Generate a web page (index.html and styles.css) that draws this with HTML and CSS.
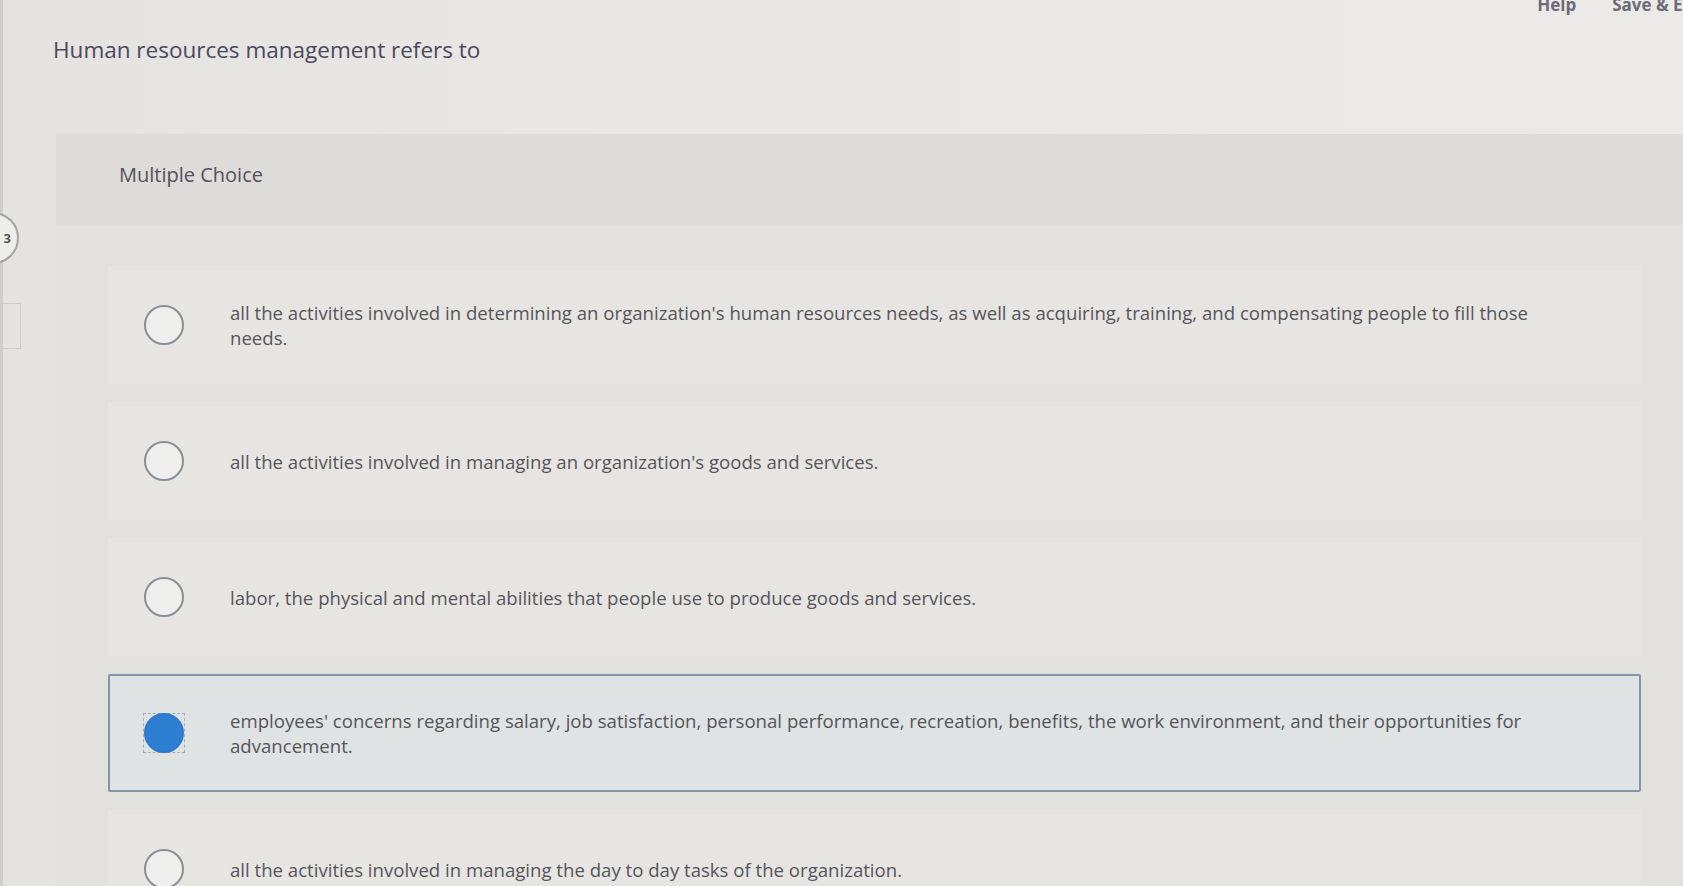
FILE: index.html
```html
<!DOCTYPE html>
<html lang="en">
<head>
<meta charset="utf-8">
<title>Multiple Choice</title>
<link rel="stylesheet" href="styles.css">
</head>
<body>
<div class="page">
  <div class="side-tab"><span>3</span></div>
  <div class="side-box"></div>
  <header class="topbar">
    <span class="top-link">Help</span>
    <span class="top-link">Save &amp; Exit</span>
  </header>
  <main class="content">
    <h1 class="question">Human resources management refers to</h1>
    <section class="panel">
      <div class="panel-head">Multiple Choice</div>
      <div class="options">
        <div class="option">
          <span class="radio"></span>
          <p class="option-text">all the activities involved in determining an organization's human resources needs, as well as acquiring, training, and compensating people to fill those needs.</p>
        </div>
        <div class="option">
          <span class="radio"></span>
          <p class="option-text">all the activities involved in managing an organization's goods and services.</p>
        </div>
        <div class="option">
          <span class="radio"></span>
          <p class="option-text">labor, the physical and mental abilities that people use to produce goods and services.</p>
        </div>
        <div class="option selected">
          <span class="radio-focus"><span class="radio checked"></span></span>
          <p class="option-text">employees' concerns regarding salary, job satisfaction, personal performance, recreation, benefits, the work environment, and their opportunities for advancement.</p>
        </div>
        <div class="option">
          <span class="radio"></span>
          <p class="option-text">all the activities involved in managing the day to day tasks of the organization.</p>
        </div>
      </div>
    </section>
  </main>
</div>
</body>
</html>
```

FILE: styles.css
```css
html, body {
  margin: 0;
  padding: 0;
}
body {
  width: 1683px;
  height: 886px;
  overflow: hidden;
  background: linear-gradient(90deg, #e4e3e0 0%, #e9e8e5 40%, #ebeae8 100%);
  font-family: "Open Sans", "Liberation Sans", sans-serif;
  color: #58585c;
}
.page {
  position: relative;
  height: 886px;
  border-left: 3px solid #cfcfcd;
  box-sizing: border-box;
}
.side-tab {
  position: absolute;
  left: -36px;
  top: 212px;
  width: 48px;
  height: 48px;
  border: 2px solid #a4a4a4;
  border-radius: 50%;
  background: #ededeb;
  display: flex;
  align-items: center;
  justify-content: flex-end;
}
.side-tab span {
  font-weight: 700;
  font-size: 13px;
  color: #555;
  margin-right: 6px;
}
.side-box {
  position: absolute;
  left: -10px;
  top: 303px;
  width: 26px;
  height: 44px;
  border: 1px solid #cdcdcb;
}
.topbar {
  height: 16px;
  display: flex;
  justify-content: flex-end;
  gap: 36px;
  margin-right: -22px;
}
.top-link {
  margin-top: -6px;
  font-size: 17px;
  line-height: 22px;
  font-weight: 700;
  color: #6c6a78;
  white-space: nowrap;
}
.content {
  padding-left: 50px;
}
.question {
  margin: 20px 0 0 0;
  font-size: 22.5px;
  line-height: 28px;
  font-weight: 400;
  color: #4b4860;
}
.panel {
  margin-top: 70px;
  margin-left: 3px;
  background: #e2e1de;
  margin-right: -20px;
  padding-bottom: 40px;
}
.panel-head {
  height: 81px;
  display: flex;
  align-items: center;
  padding-left: 63px;
  padding-bottom: 10px;
  font-size: 20px;
  color: #52525c;
  background: #dddcd9;
  margin-bottom: 41px;
}
.options {
  display: flex;
  flex-direction: column;
  gap: 18px;
  padding-left: 52px;
  padding-right: 62px;
}
.option {
  min-height: 118px;
  box-sizing: border-box;
  display: flex;
  align-items: center;
  padding-left: 34px;
  padding-right: 68px;
  background: #e6e5e2;
  border: 2px solid transparent;
}
.option.selected {
  background: #dfe3e3;
  border-color: #8195aa;
  border-radius: 2px;
}
.radio {
  flex: none;
  width: 36px;
  height: 36px;
  border: 2px solid #8a909a;
  border-radius: 50%;
  background: #eeeeec;
}
.radio.checked {
  border-color: #2b79cc;
  background: #2e7fd2;
}
.radio-focus {
  flex: none;
  display: flex;
  align-items: center;
  justify-content: center;
  width: 42px;
  height: 40px;
  margin-left: -1px;
  margin-right: -1px;
  box-sizing: border-box;
  border: 1px dashed #a8aab0;
}
.option-text {
  margin: 0 0 0 46px;
  font-size: 18.6px;
  line-height: 25px;
  color: #55555a;
}
```
